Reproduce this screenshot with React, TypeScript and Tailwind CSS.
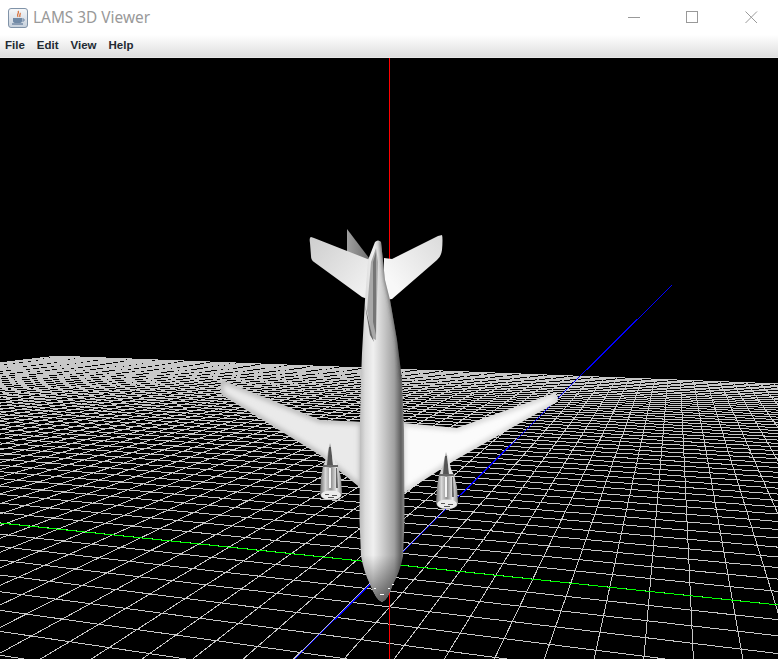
import React from "react";

const O = { x: 390, y: 564 };
const VU = { x: -2520, y: 257 };
const VV = { x: 676, y: 282 };
const A = 0.0117;
const B = 0.0398;
const NU = 52;
const NV = 50;

function proj(u: number, v: number) {
  const tu = A * u;
  const tv = B * v;
  const d = 1 + tu + tv;
  return {
    x: (O.x + tu * VU.x + tv * VV.x) / d,
    y: (O.y + tu * VU.y + tv * VV.y) / d,
  };
}

function seg(u0: number, v0: number, u1: number, v1: number) {
  const min = 0.06;
  const d0 = 1 + A * u0 + B * v0;
  const d1 = 1 + A * u1 + B * v1;
  if (d0 < min && d1 < min) return "";
  let a = [u0, v0];
  let b = [u1, v1];
  if (d0 < min) {
    const s = (min - d0) / (d1 - d0);
    a = [u0 + (u1 - u0) * s, v0 + (v1 - v0) * s];
  }
  if (d1 < min) {
    const s = (min - d0) / (d1 - d0);
    b = [u0 + (u1 - u0) * s, v0 + (v1 - v0) * s];
  }
  const p = proj(a[0], a[1]);
  const q = proj(b[0], b[1]);
  return `M${p.x.toFixed(1)} ${p.y.toFixed(1)}L${q.x.toFixed(1)} ${q.y.toFixed(1)}`;
}

function gridPath() {
  let d = "";
  for (let i = -NU; i <= NU; i++) d += seg(i, -NV, i, NV);
  for (let i = -NV; i <= NV; i++) d += seg(-NU, i, NU, i);
  return d;
}

const FUSELAGE =
  "M375 242 Q378 239 381 242 L385 280 L390 300 L397 340 L402 380 L404 430 L404.5 520 L403 556 Q400 572 393 584 Q388 600 382 602 Q376 600 370 584 Q364 572 361 556 L359.5 520 L360 420 L361 380 L362 353 L365 300 L368 260 Z";
const LEFT_WING = "M222 380 Q219 386 222 395 L320 455 L362 489 L362 422 L320 420 Z";
const RIGHT_WING = "M555 393 Q559 397 557 402 L455 460 L402 494 L402 423 L457 428 Z";

function Engine({ dx, dy }: { dx: number; dy: number }) {
  return (
    <g transform={`translate(${dx} ${dy})`}>
      <path d="M330 443 L333 456 L338 466 L341 478 L342 494 Q341 500 331 500 Q321 500 320 494 L321 478 L323 466 L327 456 Z" fill="url(#eng)" />
      <path d="M323 465 L338 465 L338 467 L323 467 Z" fill="#6a6a6a" />
      <path d="M329 447 L331 447 L333 465 L327 465 Z" fill="#555555" />
      <path d="M331 446 L332 446 L336 465 L333 465 Z" fill="#e8e8e8" />
      <path d="M329 468 L331 468 L331 488 L329 488 Z" fill="#f6f6f6" />
      <path d="M336 468 L337 468 L338 488 L336 488 Z" fill="#666666" />
      <ellipse cx="331" cy="495" rx="10" ry="4.5" fill="#ececec" />
      <path d="M325 494 L329 494 M332 495 L337 495 M328 497 L334 497" stroke="#555555" strokeWidth="1" shapeRendering="crispEdges" />
    </g>
  );
}

function Scene() {
  return (
    <svg className="block h-full w-full" viewBox="0 58 778 601">
      <defs>
        <linearGradient id="fus" x1="360" x2="404" y1="0" y2="0" gradientUnits="userSpaceOnUse">
          <stop offset="0" stopColor="#bdbdbd" />
          <stop offset="0.12" stopColor="#dcdcdc" />
          <stop offset="0.3" stopColor="#f0f0f0" />
          <stop offset="0.55" stopColor="#c8c8c8" />
          <stop offset="0.78" stopColor="#a0a0a0" />
          <stop offset="0.93" stopColor="#5f5f5f" />
          <stop offset="1" stopColor="#888888" />
        </linearGradient>
        <linearGradient id="nose" x1="0" x2="0" y1="555" y2="602" gradientUnits="userSpaceOnUse">
          <stop offset="0" stopColor="#000000" stopOpacity="0" />
          <stop offset="1" stopColor="#000000" stopOpacity="0.55" />
        </linearGradient>
        <linearGradient id="ls" x1="311" x2="368" y1="240" y2="285" gradientUnits="userSpaceOnUse">
          <stop offset="0" stopColor="#cfcfcf" />
          <stop offset="1" stopColor="#f0f0f0" />
        </linearGradient>
        <linearGradient id="rs" x1="390" x2="442" y1="280" y2="240" gradientUnits="userSpaceOnUse">
          <stop offset="0" stopColor="#f8f8f8" />
          <stop offset="1" stopColor="#dcdcdc" />
        </linearGradient>
        <linearGradient id="fin" x1="347" x2="369" y1="0" y2="0" gradientUnits="userSpaceOnUse">
          <stop offset="0" stopColor="#a0a0a0" />
          <stop offset="1" stopColor="#6e6e6e" />
        </linearGradient>
        <linearGradient id="eng" x1="320" x2="342" y1="0" y2="0" gradientUnits="userSpaceOnUse">
          <stop offset="0" stopColor="#6a6a6a" />
          <stop offset="0.25" stopColor="#d8d8d8" />
          <stop offset="0.5" stopColor="#8f8f8f" />
          <stop offset="0.75" stopColor="#e8e8e8" />
          <stop offset="1" stopColor="#888888" />
        </linearGradient>
        <clipPath id="fusClip">
          <path d={FUSELAGE} />
        </clipPath>
        <clipPath id="lwClip">
          <path d={LEFT_WING} />
        </clipPath>
        <clipPath id="rwClip">
          <path d={RIGHT_WING} />
        </clipPath>
        <filter id="soft" x="-50%" y="-10%" width="200%" height="120%">
          <feGaussianBlur stdDeviation="2" />
        </filter>
        <filter id="edge" x="-10%" y="-20%" width="120%" height="140%">
          <feGaussianBlur stdDeviation="2.5" />
        </filter>
      </defs>
      <rect x="0" y="58" width="778" height="601" fill="#000000" />
      <path d={gridPath()} stroke="#c8c8c8" strokeWidth="1" fill="none" shapeRendering="crispEdges" />
      <path d="M0 523 L778 605" stroke="#00ff00" strokeWidth="1" fill="none" shapeRendering="crispEdges" />
      <path d="M295 659 L672 285" stroke="#0000ff" strokeWidth="1" fill="none" shapeRendering="crispEdges" />
      <path d="M389.5 58 V659" stroke="#ff0000" strokeWidth="1" fill="none" shapeRendering="crispEdges" />

      <path d="M347 229 L369 258 L369 264 L347 252 Z" fill="url(#fin)" />
      <path d="M311 237 Q309 237 310 243 L311 256 Q311 260 314 262 L362 297 L370 300 L370 260 L314 238 Z" fill="url(#ls)" />
      <path d="M442 235 Q443 238 442 250 Q441 257 437 260 L392 299 L384 300 L384 258 L392 259 L438 236 Z" fill="url(#rs)" />

      <path d={LEFT_WING} fill="#eaeaea" />
      <g clipPath="url(#lwClip)">
        <path d={LEFT_WING} fill="none" stroke="#b4b4b4" strokeWidth="5" filter="url(#edge)" />
      </g>
      <path d={RIGHT_WING} fill="#fbfbfb" />
      <g clipPath="url(#rwClip)">
        <path d={RIGHT_WING} fill="none" stroke="#cfcfcf" strokeWidth="5" filter="url(#edge)" />
      </g>

      <path d={FUSELAGE} fill="url(#fus)" />
      <g clipPath="url(#fusClip)">
        <path d="M380 240 L385 280 L390 300 L397 340 L402 380 L406 380 L400 340 L393 300 L388 280 L384 240 Z" fill="#3c3c3c" filter="url(#soft)" />
        <path d={FUSELAGE} fill="url(#nose)" />
      </g>
      <path d="M371 262 L376 248 L378 262 L377 300 L376 340 L372 338 L367 310 Z" fill="#a8a8a8" />
      <path d="M373 262 L376 252 L376 335 L373 322 Z" fill="#757575" />
      <path d="M365 305 L372 335 L374 342 L370 335 Z" fill="#666666" />
      <path d="M374 588 L376 588 M380 594 L384 594 M388 588 L390 588 M392 584 L394 584" stroke="#ffffff" strokeWidth="1" shapeRendering="crispEdges" />

      <Engine dx={0} dy={0} />
      <Engine dx={116} dy={9} />
    </svg>
  );
}

function JavaIcon() {
  return (
    <svg width="20" height="20" viewBox="0 0 20 20">
      <defs>
        <linearGradient id="ji" x1="0" x2="0" y1="0" y2="1">
          <stop offset="0" stopColor="#f7f8fa" />
          <stop offset="1" stopColor="#c6d0dc" />
        </linearGradient>
      </defs>
      <rect x="0.5" y="0.5" width="19" height="19" rx="2.5" fill="url(#ji)" stroke="#8093a8" />
      <path d="M10 3 C12 5 8 6 10 9 M12 5 C13 6 11 7 12 9" stroke="#d9703a" strokeWidth="1.3" fill="none" />
      <path d="M5 10 H14 V13 Q14 15 11 15 H8 Q5 15 5 13 Z" fill="#7089a6" />
      <path d="M14 11 H16 V13 H14" stroke="#7089a6" strokeWidth="1" fill="none" />
      <path d="M4 16 H15" stroke="#5c7696" strokeWidth="1.2" />
    </svg>
  );
}

export default function App() {
  return (
    <div className="flex h-[659px] w-[778px] flex-col overflow-hidden bg-white">
      <div className="flex h-[35px] items-center bg-white">
        <div className="ml-[8px] mr-[5px] flex h-[20px] w-[20px]">
          <JavaIcon />
        </div>
        <span className="font-['Noto_Sans',sans-serif] text-[15.4px] leading-none text-[#999999]">LAMS 3D Viewer</span>
        <div className="ml-auto flex items-center">
          <svg width="13" height="13" viewBox="0 0 13 13" className="mr-[45px]">
            <path d="M0 6.5 H12" stroke="#999999" />
          </svg>
          <svg width="13" height="13" viewBox="0 0 13 13" className="mr-[46px]">
            <rect x="0.5" y="0.5" width="11" height="11" fill="none" stroke="#999999" />
          </svg>
          <svg width="13" height="13" viewBox="0 0 13 13" className="mr-[20px]">
            <path d="M0.5 0.5 L12 12 M12 0.5 L0.5 12" stroke="#999999" />
          </svg>
        </div>
      </div>
      <div className="flex h-[23px] items-center gap-[12px] border-b border-[#e8e8e8] bg-gradient-to-b from-white to-[#dedede] pl-[5px] font-['Liberation_Sans',sans-serif] text-[11.5px] font-bold text-[#222a33]">
        <span>File</span>
        <span>Edit</span>
        <span>View</span>
        <span>Help</span>
      </div>
      <div className="min-h-0 flex-1 bg-black">
        <Scene />
      </div>
    </div>
  );
}
